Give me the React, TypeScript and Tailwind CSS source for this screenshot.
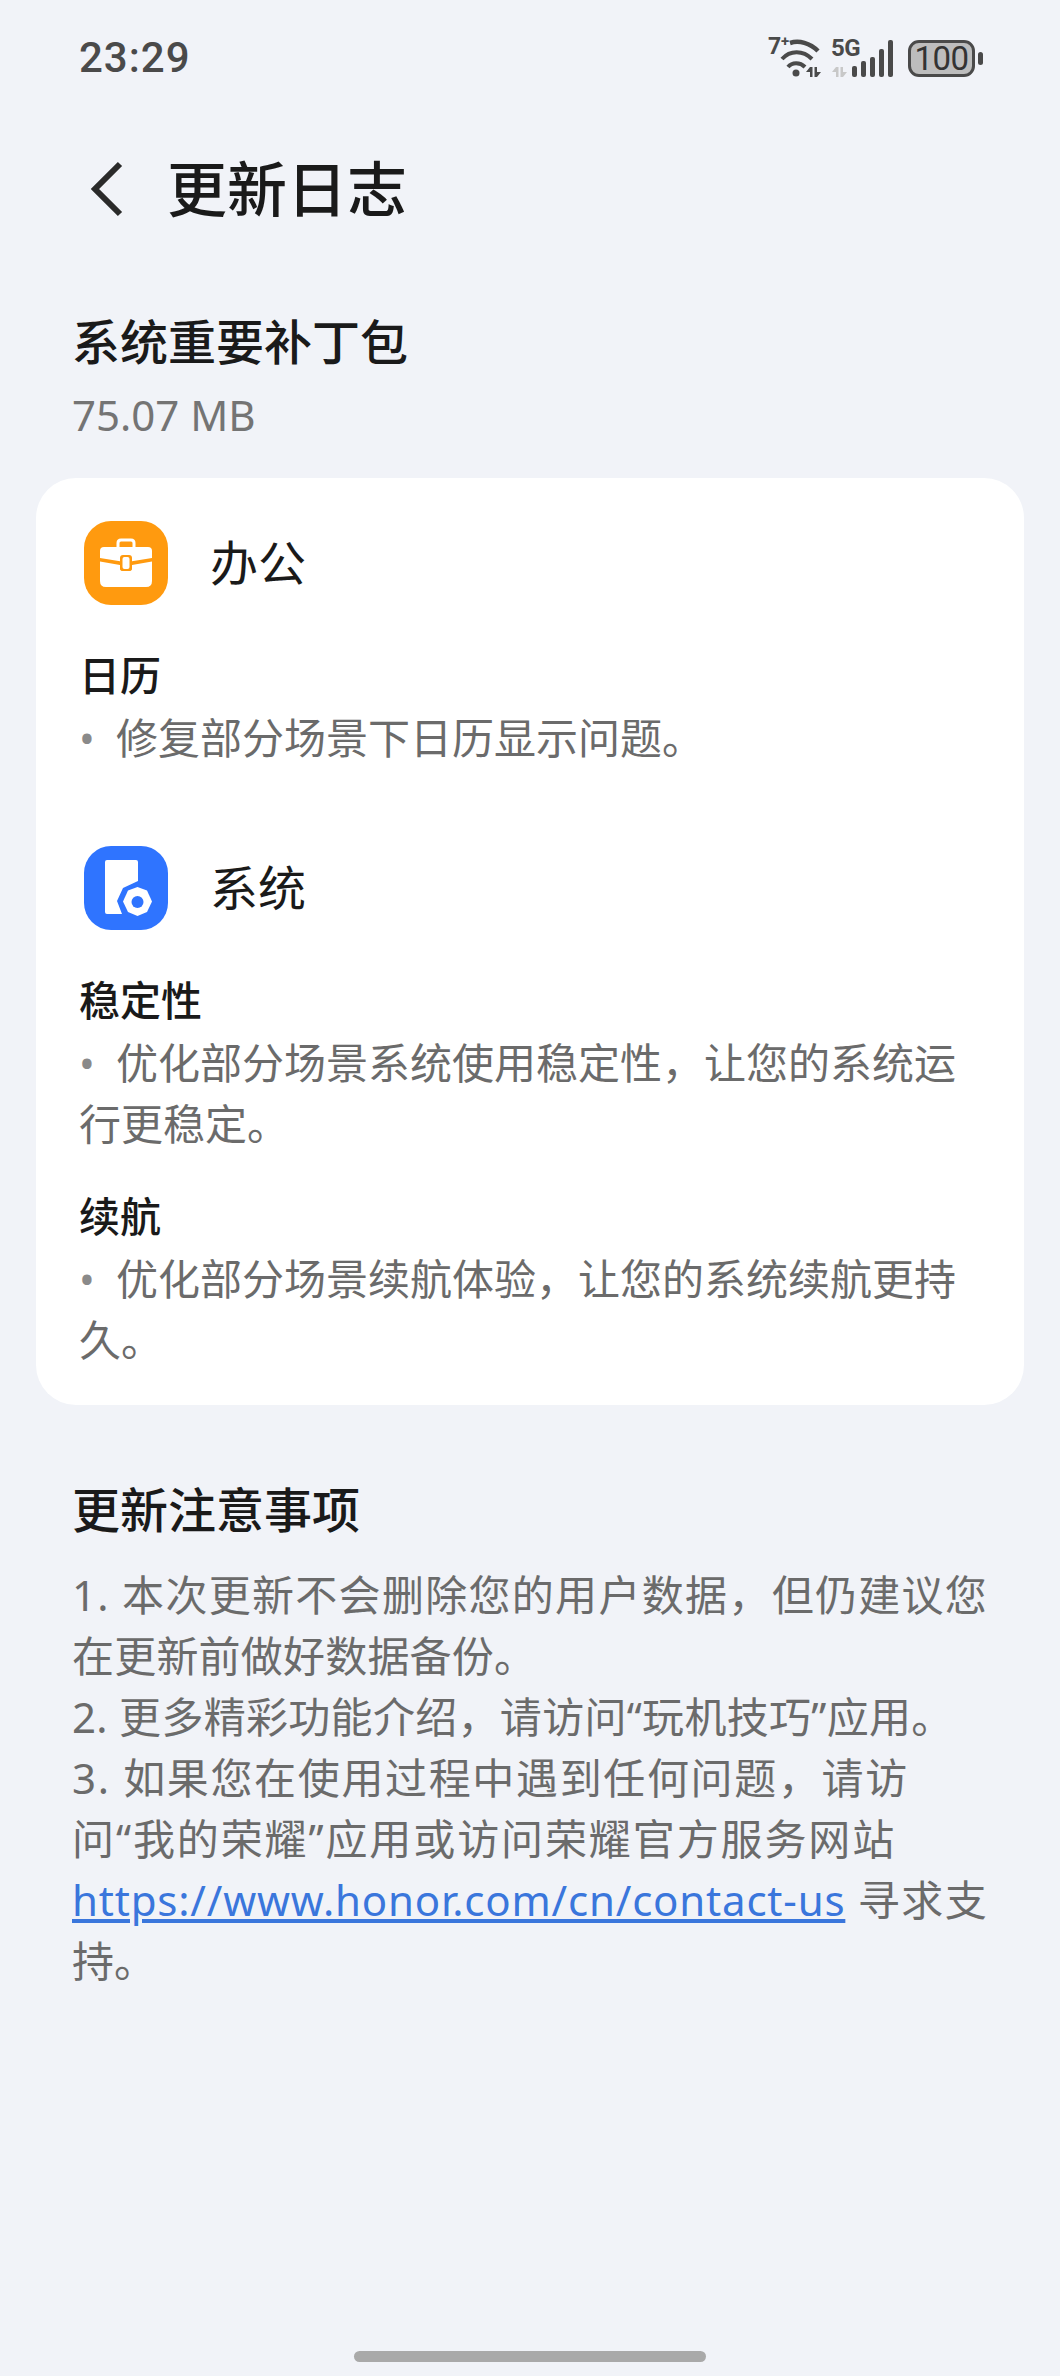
const cjk = "font-['Noto_Sans','Noto_Sans_CJK_SC',sans-serif]";
const comma = "\uFF0C";

function WifiIcon() {
  return (
    <svg width="40" height="38" viewBox="0 0 40 38" fill="none" className="block">
      <path d="M10 4 C19 1 30 4 38 12" stroke="#4a4a4a" strokeWidth="4.5" />
      <path d="M2 20 C10 11 23 11 32 20" stroke="#4a4a4a" strokeWidth="4" />
      <path d="M8 28 C12 23 20 23 25 28" stroke="#4a4a4a" strokeWidth="4" />
      <circle cx="16" cy="34" r="3.5" fill="#4a4a4a" />
    </svg>
  );
}

function Arrows({ color }: { color: string }) {
  return (
    <svg width="15" height="10" viewBox="0 0 15 10" className="block">
      <path d="M0 5 L4 0 H6.5 V10 H4 V5 Z" fill={color} />
      <path d="M15 5 L11 10 H8.5 V0 H11 V5 Z" fill={color} />
    </svg>
  );
}

function StatusIcons() {
  return (
    <div className="flex items-center">
      <div className="relative w-[56px] h-[46px]">
        <span className="absolute left-[2px] top-[0px] text-[23px] leading-[24px] font-bold text-[#4a4a4a] font-['Roboto',sans-serif]">
          7
        </span>
        <span className="absolute left-[15px] top-[-3px] text-[15px] leading-[18px] font-bold text-[#4a4a4a] font-['Roboto',sans-serif]">
          +
        </span>
        <div className="absolute left-[14px] top-[4px]">
          <WifiIcon />
        </div>
        <div className="absolute left-[40px] top-[32px]">
          <Arrows color="#4a4a4a" />
        </div>
      </div>
      <div className="relative w-[62px] h-[46px] ml-[9px]">
        <span className="absolute left-0 top-[0px] text-[24px] leading-[26px] font-bold text-[#4a4a4a] font-['Roboto',sans-serif] tracking-[-0.5px]">
          5G
        </span>
        <div className="absolute left-[1px] top-[32px]">
          <Arrows color="#c8c8c8" />
        </div>
        <div className="absolute right-0 bottom-[4px] flex items-end gap-[3.5px]">
          <div className="w-[5.5px] h-[11px] rounded-[2px] bg-[#4a4a4a]" />
          <div className="w-[5.5px] h-[16px] rounded-[2px] bg-[#4a4a4a]" />
          <div className="w-[5.5px] h-[20px] rounded-[2px] bg-[#4a4a4a]" />
          <div className="w-[5.5px] h-[28px] rounded-[2px] bg-[#4a4a4a]" />
          <div className="w-[5.5px] h-[37px] rounded-[2px] bg-[#4a4a4a]" />
        </div>
      </div>
      <div className="ml-[15px] flex items-center gap-[3px]">
        <div className="w-[67px] h-[37px] rounded-[11px] border-[3px] border-[#4a4a4a] bg-[#bdbdbd] flex items-center justify-center text-[33px] leading-none text-[#333333] font-['Roboto',sans-serif] tracking-[-0.5px]">
          100
        </div>
        <div className="w-[5px] h-[13px] rounded-[3px] bg-[#4a4a4a]" />
      </div>
    </div>
  );
}

function BagIcon() {
  return (
    <svg width="84" height="84" viewBox="0 0 84 84" className="block">
      <rect x="0" y="0" width="84" height="84" rx="27" fill="#ff9a0f" />
      <path d="M34 26 V22 Q34 19 37 19 H47 Q50 19 50 22 V26" fill="none" stroke="#ffffff" strokeWidth="3" />
      <path d="M20 26 H64 Q68 26 68 30 V37 L46.5 40.5 H37.5 L16 37 V30 Q16 26 20 26 Z" fill="#ffffff" />
      <path d="M16 40.5 L36 44 V47 Q36 50 39 50 H45 Q48 50 48 47 V44 L68 40.5 V60 Q68 66 62 66 H22 Q16 66 16 60 Z" fill="#ffffff" />
      <rect x="36" y="34" width="12" height="16" rx="3" fill="#ff9a0f" />
      <rect x="38.5" y="36" width="7" height="12" rx="2" fill="#ffffff" />
    </svg>
  );
}

function SystemIcon() {
  return (
    <svg width="84" height="84" viewBox="0 0 84 84" className="block">
      <rect x="0" y="0" width="84" height="84" rx="27" fill="#2f74ff" />
      <path d="M23 14 Q21 14 21 16 V66 Q21 68 23 68 H38 L33 55 L39 42 L54 35 V16 Q54 14 52 14 Z" fill="#ffffff" />
      <path d="M53.5 41 L63 44.5 L68 55.5 L63 66 L53.5 70 L44 66 L39 55.5 L44 44.5 Z" fill="#ffffff" />
      <circle cx="53.5" cy="56" r="6" fill="#2f74ff" />
    </svg>
  );
}

function Category({ icon, name }: { icon: React.ReactNode; name: string }) {
  return (
    <div className="flex items-center pl-[48px] h-[84px]">
      {icon}
      <span className="ml-[42px] text-[48px] leading-[84px] text-[#1a1a1a]">{name}</span>
    </div>
  );
}

function Item({ title, lines }: { title: string; lines: string[] }) {
  return (
    <div className="pl-[43px] pr-[32px]">
      <div className="text-[41px] leading-[63px] font-medium text-[#1a1a1a]">{title}</div>
      <div className="text-[42px] leading-[61px] text-[#6b6b6b]">
        {lines.map((l, i) => (
          <div key={i} className="whitespace-nowrap">
            {i === 0 ? (
              <span className="inline-block w-[37px] text-[#8a8a8a]">•</span>
            ) : null}
            {l}
          </div>
        ))}
      </div>
    </div>
  );
}

export default function App() {
  return (
    <div className={`w-[1060px] h-[2376px] bg-[#f1f3f8] flex flex-col relative overflow-hidden ${cjk}`}>
      <div className="flex items-center justify-between h-[46px] mt-[35px] pl-[79px] pr-[77px]">
        <span className="text-[42px] leading-[46px] font-medium text-[#4a4a4a] font-['Roboto',sans-serif] tracking-[1px]">
          23:29
        </span>
        <StatusIcons />
      </div>

      <div className="flex items-center h-[80px] mt-[68px] pl-[90px]">
        <svg width="34" height="56" viewBox="0 0 34 56" fill="none" className="block">
          <path d="M30 3 L5 28 L30 53" stroke="#2a2a2a" strokeWidth="6" />
        </svg>
        <span className="ml-[43px] text-[60px] leading-[80px] font-medium text-[#1a1a1a]">更新日志</span>
      </div>

      <div className="mt-[83px] pl-[72px] text-[48px] leading-[60px] font-medium text-[#1a1a1a]">系统重要补丁包</div>
      <div className="mt-[16px] pl-[72px] text-[42px] leading-[54px] text-[#747474]">75.07 MB</div>

      <div className="mx-[36px] mt-[36px] h-[927px] bg-white rounded-[40px] pt-[43px]">
        <Category icon={<BagIcon />} name="办公" />
        <div className="mt-[39px]">
          <Item title="日历" lines={["修复部分场景下日历显示问题。"]} />
        </div>
        <div className="mt-[78px]">
          <Category icon={<SystemIcon />} name="系统" />
        </div>
        <div className="mt-[39px]">
          <Item title="稳定性" lines={[`优化部分场景系统使用稳定性${comma}让您的系统运`, "行更稳定。"]} />
        </div>
        <div className="mt-[31px]">
          <Item title="续航" lines={[`优化部分场景续航体验${comma}让您的系统续航更持`, "久。"]} />
        </div>
      </div>

      <div className="mt-[75px] pl-[72px] text-[48px] leading-[60px] font-medium text-[#1a1a1a]">更新注意事项</div>
      <div className="mt-[24px] pl-[72px] text-[42px] leading-[61px] text-[#6b6b6b] whitespace-nowrap">
        <div className="tracking-[1.3px]">1. 本次更新不会删除您的用户数据{comma}但仍建议您</div>
        <div className="tracking-[0.2px]">在更新前做好数据备份。</div>
        <div className="tracking-[0.3px]">2. 更多精彩功能介绍{comma}请访问“玩机技巧”应用。</div>
        <div className="tracking-[1.65px]">3. 如果您在使用过程中遇到任何问题{comma}请访</div>
        <div className="tracking-[1.9px]">问“我的荣耀”应用或访问荣耀官方服务网站</div>
        <div className="tracking-[1.5px]">
          <a className="text-[#3a76dc] underline tracking-[0.8px]">https://www.honor.com/cn/contact-us</a> 寻求支
        </div>
        <div>持。</div>
      </div>

      <div className="absolute left-[354px] bottom-[14px] w-[352px] h-[11px] rounded-full bg-[#a9a9a9]" />
    </div>
  );
}
